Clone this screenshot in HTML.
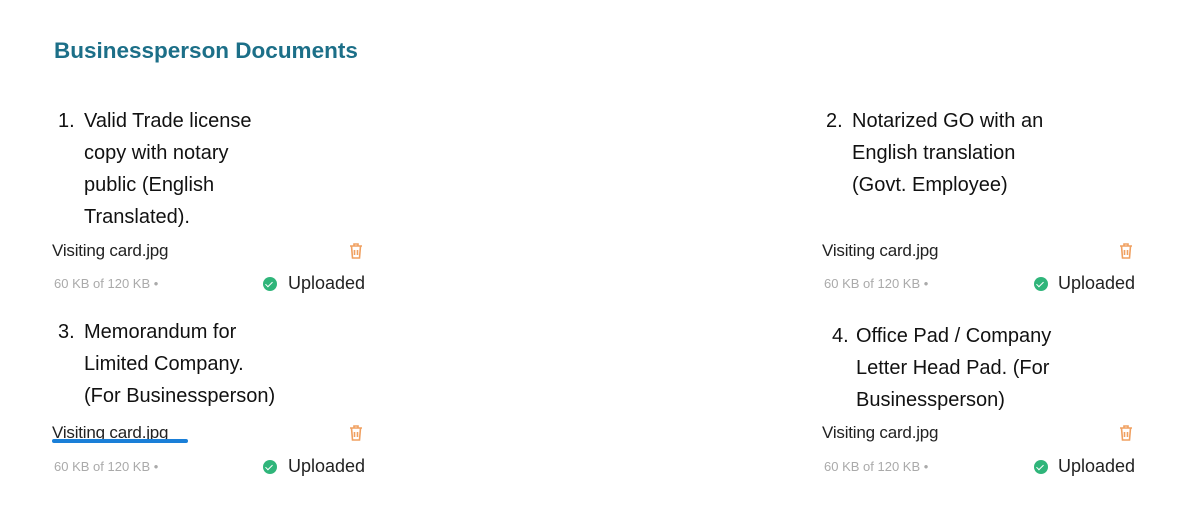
<!DOCTYPE html>
<html><head><meta charset="utf-8"><style>
body{margin:0;width:1200px;height:525px;background:#fff;font-family:"Liberation Sans",sans-serif;position:relative;overflow:hidden}
.a{position:absolute;white-space:nowrap}
.t{font-size:22.5px;font-weight:bold;color:#1c6f88;left:54px;top:38px}
.l{font-size:20px;color:#111;line-height:32px}
.f{font-size:17px;color:#222;letter-spacing:-0.2px}
.s{font-size:13px;color:#aaa}
.u{font-size:18px;color:#222}
.c{width:14px;height:14px;border-radius:50%;background:#2fb57a}
.c::after{content:"";position:absolute;left:4px;top:3px;width:3px;height:6px;border:solid #fff;border-width:0 1.5px 1.5px 0;transform:rotate(45deg)}
</style></head><body>
<div class="a t">Businessperson Documents</div>

<div class="a l" style="left:58px;top:105px">1.</div>
<div class="a l" style="left:84px;top:105px">Valid Trade license<br>copy with notary<br>public (English<br>Translated).</div>
<div class="a l" style="left:826px;top:105px">2.</div>
<div class="a l" style="left:852px;top:105px">Notarized GO with an<br>English translation<br>(Govt. Employee)</div>
<div class="a l" style="left:58px;top:316px">3.</div>
<div class="a l" style="left:84px;top:316px">Memorandum for<br>Limited Company.<br>(For Businessperson)</div>
<div class="a l" style="left:832px;top:320px">4.</div>
<div class="a l" style="left:856px;top:320px">Office Pad / Company<br>Letter Head Pad. (For<br>Businessperson)</div>

<div class="a f" style="left:52px;top:241px">Visiting card.jpg</div>
<div class="a s" style="left:54px;top:276px">60 KB of 120 KB •</div>
<div class="a c" style="left:263px;top:277px"></div>
<div class="a u" style="left:288px;top:273px">Uploaded</div>
<svg class="a" style="left:348px;top:242px" width="16" height="18" viewBox="0 0 16 18" fill="none" stroke="#f0a060" stroke-width="1.6"><path d="M2 4h12M6 4V2h4v2M3.5 4l1 12h7l1-12M6.5 8v5M9.5 8v5"/></svg>

<div class="a f" style="left:822px;top:241px">Visiting card.jpg</div>
<div class="a s" style="left:824px;top:276px">60 KB of 120 KB •</div>
<div class="a c" style="left:1034px;top:277px"></div>
<div class="a u" style="left:1058px;top:273px">Uploaded</div>
<svg class="a" style="left:1118px;top:242px" width="16" height="18" viewBox="0 0 16 18" fill="none" stroke="#f0a060" stroke-width="1.6"><path d="M2 4h12M6 4V2h4v2M3.5 4l1 12h7l1-12M6.5 8v5M9.5 8v5"/></svg>

<div class="a f" style="left:52px;top:423px">Visiting card.jpg</div>
<div class="a" style="left:52px;top:439px;width:136px;height:4px;border-radius:2px;background:#1a7fd8"></div>
<div class="a s" style="left:54px;top:459px">60 KB of 120 KB •</div>
<div class="a c" style="left:263px;top:460px"></div>
<div class="a u" style="left:288px;top:456px">Uploaded</div>
<svg class="a" style="left:348px;top:424px" width="16" height="18" viewBox="0 0 16 18" fill="none" stroke="#f0a060" stroke-width="1.6"><path d="M2 4h12M6 4V2h4v2M3.5 4l1 12h7l1-12M6.5 8v5M9.5 8v5"/></svg>

<div class="a f" style="left:822px;top:423px">Visiting card.jpg</div>
<div class="a s" style="left:824px;top:459px">60 KB of 120 KB •</div>
<div class="a c" style="left:1034px;top:460px"></div>
<div class="a u" style="left:1058px;top:456px">Uploaded</div>
<svg class="a" style="left:1118px;top:424px" width="16" height="18" viewBox="0 0 16 18" fill="none" stroke="#f0a060" stroke-width="1.6"><path d="M2 4h12M6 4V2h4v2M3.5 4l1 12h7l1-12M6.5 8v5M9.5 8v5"/></svg>
</body></html>
